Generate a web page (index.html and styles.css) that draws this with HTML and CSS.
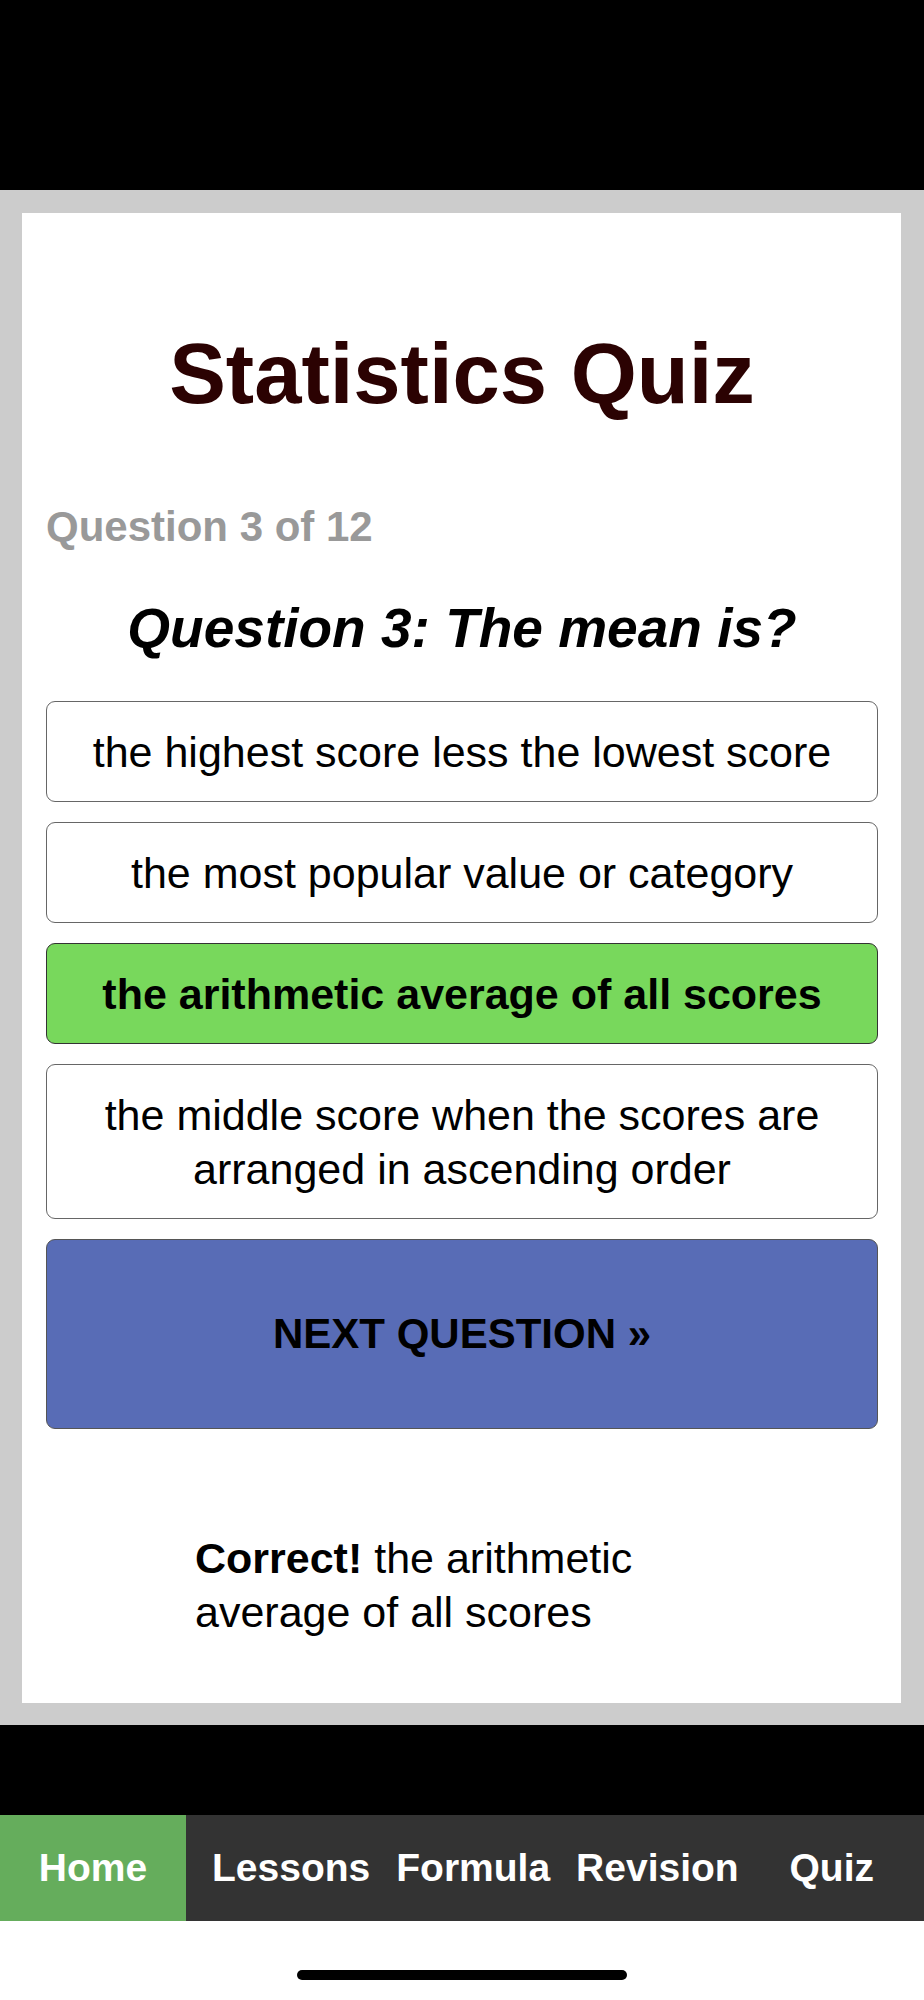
FILE: index.html
```html
<!doctype html>
<html lang="en">
    <head>
        <meta charset="UTF-8" />
        <meta name="viewport" content="width=device-width, initial-scale=1.0" />
        <title>Statistics Quiz</title>
        <link rel="stylesheet" href="styles.css">
    </head>
    <body>
        <div class="status-bar"></div>

        <div class="frame">
            <div class="card">
                <h1>Statistics Quiz</h1>

                <p class="progress">Question 3 of 12</p>

                <h2>Question 3: The mean is?</h2>

                <div class="options">
                    <button class="option">the highest score less the lowest score</button>
                    <button class="option">the most popular value or category</button>
                    <button class="option correct">the arithmetic average of all scores</button>
                    <button class="option">the middle score when the scores are arranged in ascending order</button>
                    <button class="next-btn">NEXT QUESTION &raquo;</button>
                </div>

                <p class="feedback"><strong>Correct!</strong> the arithmetic average of all scores</p>
            </div>
        </div>

        <div class="gap-bar"></div>

        <nav class="tab-bar">
            <a class="tab active" href="#">Home</a>
            <a class="tab" href="#">Lessons</a>
            <a class="tab" href="#">Formula</a>
            <a class="tab" href="#">Revision</a>
            <a class="tab last" href="#">Quiz</a>
        </nav>

        <div class="home-area">
            <div class="home-indicator"></div>
        </div>
    </body>
</html>
```

FILE: styles.css
```css
* {
    font-family: 'Liberation Sans', Arial, sans-serif;
    margin: 0;
    padding: 0;
    box-sizing: border-box;
}

body {
    background-color: white;
    width: 924px;
}

.status-bar {
    height: 190px;
    background-color: #000;
}

.frame {
    background-color: #cccccc;
    padding: 23px 23px 22px 22px;
}

.card {
    background-color: white;
    padding: 111px 23px 64px 24px;
}

h1 {
    text-align: center;
    font-size: 85px;
    font-weight: 700;
    color: #2b0202;
    line-height: 99px;
}

.progress {
    margin-top: 80px;
    font-size: 42px;
    font-weight: 700;
    color: #999;
    line-height: 47px;
}

h2 {
    margin-top: 46px;
    text-align: center;
    font-size: 55px;
    font-weight: 700;
    font-style: italic;
    color: #000;
    line-height: 64px;
}

.options {
    margin-top: 41px;
    display: flex;
    flex-direction: column;
    gap: 20px;
}

.option,
.next-btn {
    width: 100%;
    padding: 22.5px 30px;
    border: 1.5px solid #666;
    border-radius: 9px;
    background-color: white;
    color: #000;
    font-size: 43px;
    line-height: 54px;
    text-align: center;
    cursor: pointer;
}

.option.correct {
    background-color: #78d85c;
    border-color: #333;
    font-weight: 700;
}

.next-btn {
    padding: 67px 30px;
    background-color: #586cb6;
    border-color: #555;
    font-size: 42px;
    font-weight: 700;
}

.feedback {
    width: 534px;
    margin: 102px auto 0;
    font-size: 43px;
    line-height: 54px;
    color: #000;
}

.gap-bar {
    height: 90px;
    background-color: #000;
}

/* Bottom navigation */
.tab-bar {
    display: flex;
    align-items: stretch;
    height: 106px;
    background-color: #333;
}

.tab {
    display: flex;
    align-items: center;
    padding-left: 26px;
    color: white;
    font-size: 39px;
    font-weight: 700;
    text-decoration: none;
}

.tab.active {
    width: 186px;
    justify-content: center;
    padding: 0;
    background-color: #65ad5c;
}

.tab.last {
    margin-left: auto;
    padding-right: 50px;
}

.home-area {
    height: 77px;
    display: flex;
    justify-content: center;
    padding-top: 49px;
}

.home-indicator {
    width: 330px;
    height: 10px;
    border-radius: 5px;
    background-color: #000;
}
```
